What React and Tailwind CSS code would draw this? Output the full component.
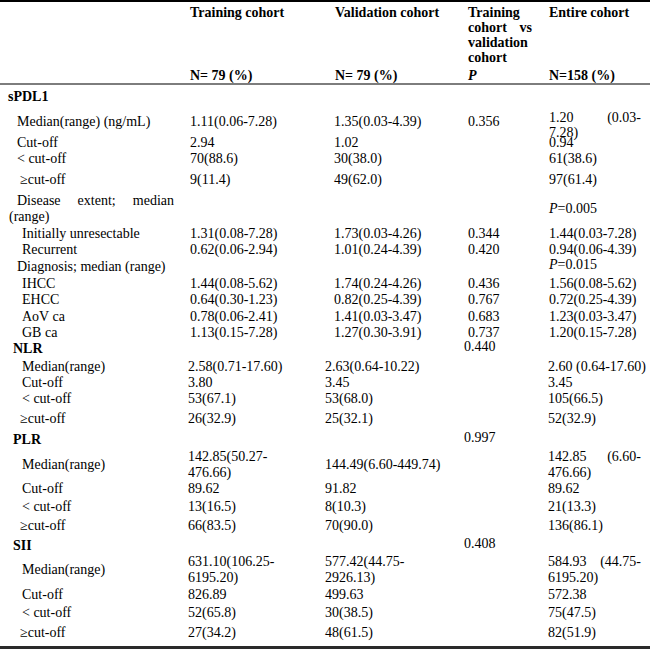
import React from "react";

const GRID = "grid grid-cols-[188px_136px_139px_85px_102px] items-start";
const UP = ["pl-[2px]", "pl-[10px]", "pl-[5px]", "pl-[1px] pr-[9px]"];
const LO = ["pl-0", "pl-[1px]", "pl-[1px]", "pl-0 pr-[9px]"];

const J = (a, b, c, lead = "leading-4") => (
  <div className={lead}>
    <div className="flex justify-between">
      <span>{a}</span>
      <span>{b}</span>
    </div>
    <div>{c}</div>
  </div>
);

const T = (a, b) => (
  <div className="leading-4">
    {a}
    <br />
    {b}
  </div>
);

const P = (v) => (
  <span>
    <i>P</i>={v}
  </span>
);

const rows = [
  { h: "h-[21px]", lc: "pl-[8px] font-bold", l: "sPDL1", v: ["", "", "", ""], u: true },
  {
    h: "h-[25px]",
    lc: "pl-[17px]",
    l: "Median(range) (ng/mL)",
    v: ["1.11(0.06-7.28)", "1.35(0.03-4.39)", "0.356", J("1.20", "(0.03-", "7.28)", "leading-[15px]")],
    u: true,
    sp: "pt-[4px]",
  },
  { h: "h-[16px]", lc: "pl-[17px]", l: "Cut-off", v: ["2.94", "1.02", "", "0.94"], u: true },
  { h: "h-[21px]", lc: "pl-[17px]", l: "< cut-off", v: ["70(88.6)", "30(38.0)", "", "61(38.6)"], u: true },
  { h: "h-[21px]", lc: "pl-[20px]", l: "≥cut-off", v: ["9(11.4)", "49(62.0)", "", "97(61.4)"], u: true },
  {
    h: "h-[33px]",
    lc: "",
    l: (
      <div className="leading-4 pl-[9px] pr-[14px]">
        <div className="flex justify-between pl-[8px]">
          <span>Disease</span>
          <span>extent;</span>
          <span>median</span>
        </div>
        <div>(range)</div>
      </div>
    ),
    v: ["", "", "", { t: P("0.005"), c: "pt-2" }],
    u: true,
    sp: "pt-2",
  },
  { h: "h-[16px]", lc: "pl-[22px]", l: "Initially unresectable", v: ["1.31(0.08-7.28)", "1.73(0.03-4.26)", "0.344", "1.44(0.03-7.28)"], u: true },
  { h: "h-[17px]", lc: "pl-[22px]", l: "Recurrent", v: ["0.62(0.06-2.94)", "1.01(0.24-4.39)", "0.420", "0.94(0.06-4.39)"], u: true },
  { h: "h-[17px]", lc: "pl-[17px]", l: "Diagnosis; median (range)", v: ["", "", "", { t: P("0.015"), c: "-mt-0.5" }], u: true },
  { h: "h-[16px]", lc: "pl-[22px]", l: "IHCC", v: ["1.44(0.08-5.62)", "1.74(0.24-4.26)", "0.436", "1.56(0.08-5.62)"], u: true },
  { h: "h-[17px]", lc: "pl-[22px]", l: "EHCC", v: ["0.64(0.30-1.23)", "0.82(0.25-4.39)", "0.767", "0.72(0.25-4.39)"], u: true },
  { h: "h-[16px]", lc: "pl-[22px]", l: "AoV ca", v: ["0.78(0.06-2.41)", "1.41(0.03-3.47)", "0.683", "1.23(0.03-3.47)"], u: true },
  { h: "h-[16px]", lc: "pl-[22px]", l: "GB ca", v: ["1.13(0.15-7.28)", "1.27(0.30-3.91)", "0.737", "1.20(0.15-7.28)"], u: true },

  { h: "h-[18px]", lc: "pl-[13px] font-bold", l: "NLR", v: ["", "", { t: "0.440", c: "-mt-[2px]" }, ""] },
  { h: "h-[16px]", lc: "pl-[22px]", l: "Median(range)", v: ["2.58(0.71-17.60)", "2.63(0.64-10.22)", "", "2.60 (0.64-17.60)"] },
  { h: "h-[16px]", lc: "pl-[22px]", l: "Cut-off", v: ["3.80", "3.45", "", "3.45"] },
  { h: "h-[20px]", lc: "pl-[22px]", l: "< cut-off", v: ["53(67.1)", "53(68.0)", "", "105(66.5)"] },
  { h: "h-[21px]", lc: "pl-[20px]", l: "≥cut-off", v: ["26(32.9)", "25(32.1)", "", "52(32.9)"] },

  { h: "h-[17px]", lc: "pl-[13px] font-bold", l: "PLR", v: ["", "", { t: "0.997", c: "-mt-0.5" }, ""] },
  {
    h: "h-[32px]",
    lc: "pl-[22px]",
    l: "Median(range)",
    v: [T("142.85(50.27-", "476.66)"), "144.49(6.60-449.74)", "", J("142.85", "(6.60-", "476.66)")],
    sp: "pt-2",
  },
  { h: "h-[18px]", lc: "pl-[22px]", l: "Cut-off", v: ["89.62", "91.82", "", "89.62"] },
  { h: "h-[19px]", lc: "pl-[22px]", l: "< cut-off", v: ["13(16.5)", "8(10.3)", "", "21(13.3)"] },
  { h: "h-[20px]", lc: "pl-[20px]", l: "≥cut-off", v: ["66(83.5)", "70(90.0)", "", "136(86.1)"] },

  { h: "h-[16px]", lc: "pl-[13px] font-bold", l: "SII", v: ["", "", { t: "0.408", c: "-mt-0.5" }, ""] },
  {
    h: "h-[33px]",
    lc: "pl-[22px]",
    l: "Median(range)",
    v: [T("631.10(106.25-", "6195.20)"), T("577.42(44.75-", "2926.13)"), "", J("584.93", "(44.75-", "6195.20)")],
    sp: "pt-2",
  },
  { h: "h-[18px]", lc: "pl-[22px]", l: "Cut-off", v: ["826.89", "499.63", "", "572.38"] },
  { h: "h-[20px]", lc: "pl-[22px]", l: "< cut-off", v: ["52(65.8)", "30(38.5)", "", "75(47.5)"] },
  { h: "h-[21px]", lc: "pl-[20px]", l: "≥cut-off", v: ["27(34.2)", "48(61.5)", "", "82(51.9)"] },
];

function Row({ r }) {
  const pads = r.u ? UP : LO;
  const sp = r.sp || "";
  return (
    <div className={`${GRID} ${r.h}`}>
      <div className={`${r.lc} ${typeof r.l === "string" ? sp : ""} whitespace-nowrap`}>{r.l}</div>
      {r.v.map((v, i) => {
        let content = v;
        let extra = "";
        if (v && typeof v === "object" && "t" in v) {
          content = v.t;
          extra = v.c;
        } else if (typeof v === "string") {
          extra = sp;
        }
        return (
          <div key={i} className={`${pads[i]} ${extra} whitespace-nowrap`}>
            {content}
          </div>
        );
      })}
    </div>
  );
}

export default function App() {
  return (
    <div className="w-[650px] h-[652px] bg-white text-black font-['Liberation_Serif','Times_New_Roman',serif] text-[14px] leading-4 overflow-hidden">
      <div className="border-t-2 border-black">
        <div className={`${GRID} h-[81px] leading-[15px] font-bold`}>
          <div />
          <div className="h-full flex flex-col justify-between pl-[2px] pt-[3px]">
            <div>Training cohort</div>
            <div>N= 79 (%)</div>
          </div>
          <div className="h-full flex flex-col justify-between pl-[11px] pt-[3px]">
            <div>Validation cohort</div>
            <div>N= 79 (%)</div>
          </div>
          <div className="h-full flex flex-col justify-between pl-[5px] pr-[16px] pt-[3px]">
            <div>
              <div>Training</div>
              <div className="flex justify-between">
                <span>cohort</span>
                <span>vs</span>
              </div>
              <div>validation</div>
              <div>cohort</div>
            </div>
            <div className="italic">P</div>
          </div>
          <div className="h-full flex flex-col justify-between pl-[1px] pt-[3px]">
            <div>Entire cohort</div>
            <div>N=158 (%)</div>
          </div>
        </div>
        <div className="border-t-2 border-[#7d7d7d] pt-[4px] border-b-[3px] border-b-[#2a2a2a]">
          {rows.map((r, i) => (
            <Row key={i} r={r} />
          ))}
        </div>
      </div>
    </div>
  );
}
